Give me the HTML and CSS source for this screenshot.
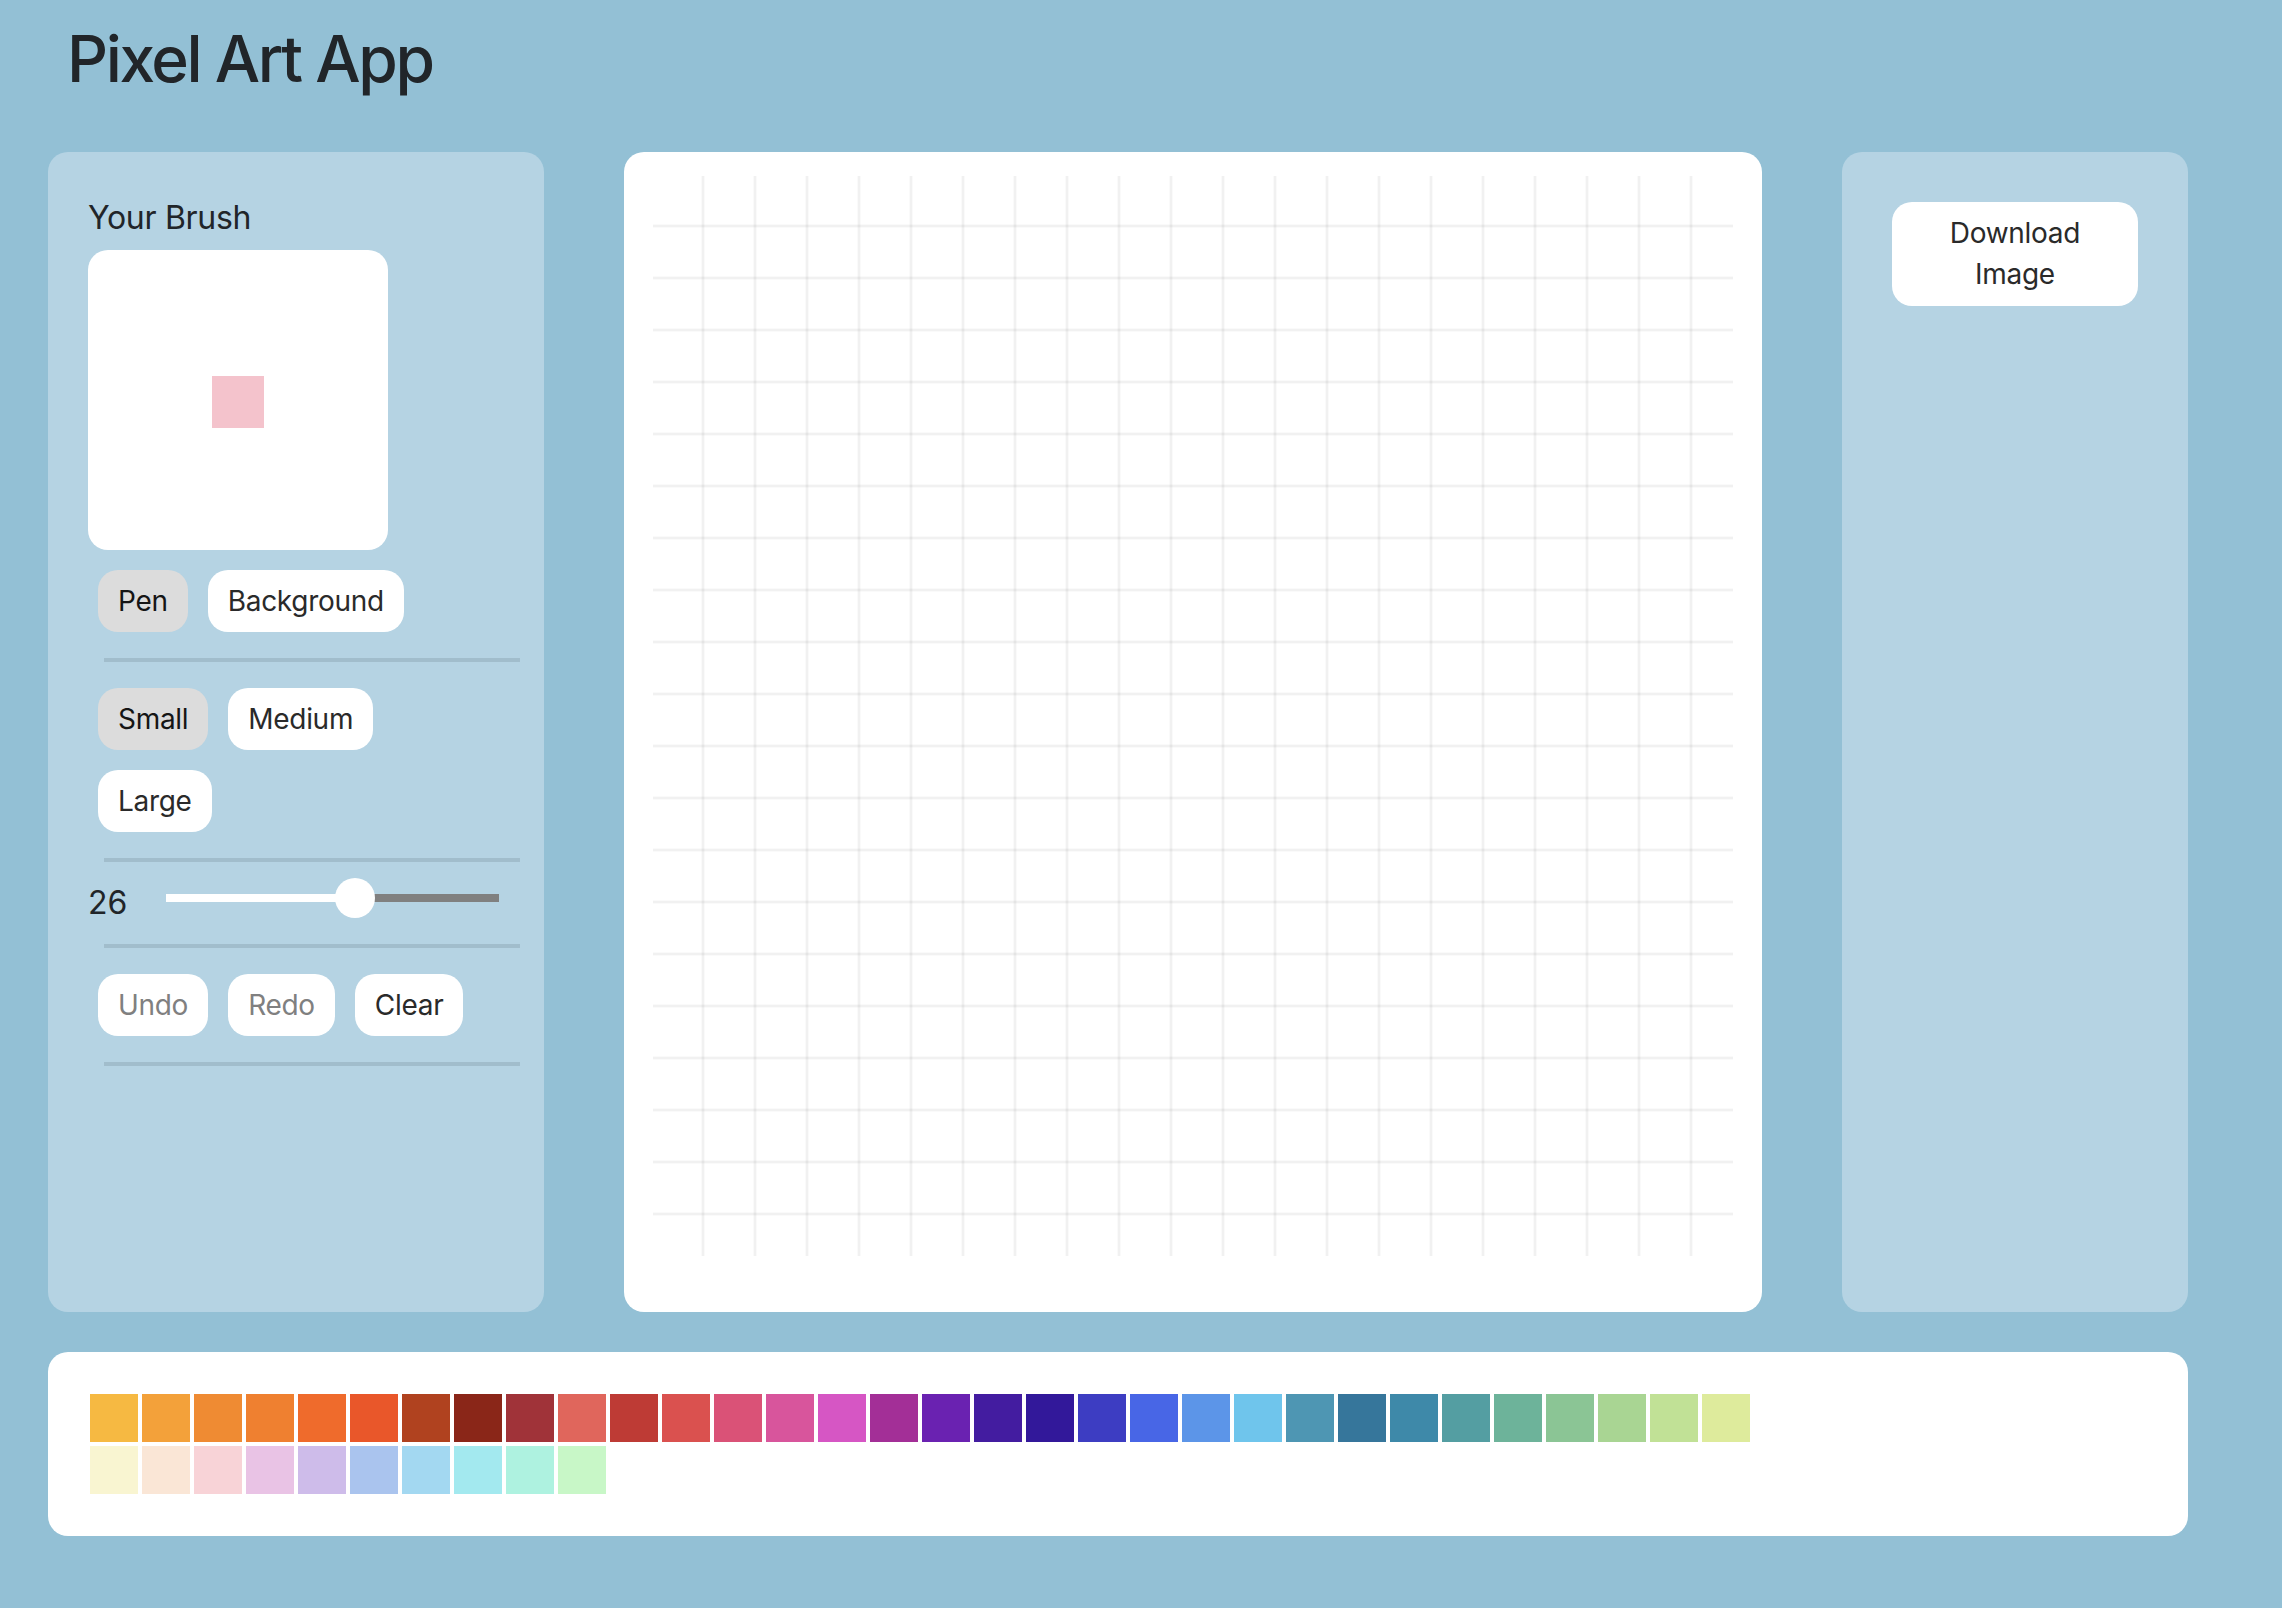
FILE: index.html
```html
<!DOCTYPE html>
<html lang="en">
<head>
<meta charset="utf-8">
<title>Pixel Art App</title>
<link rel="stylesheet" href="styles.css">
</head>
<body>
<h1 class="app-title">Pixel Art App</h1>
<div class="layout">
  <div class="workspace">
    <aside class="panel tools">
      <div class="brush-label">Your Brush</div>
      <div class="brush-preview"><div class="brush-dot"></div></div>
      <div class="btn-group">
        <button class="btn active">Pen</button>
        <button class="btn">Background</button>
      </div>
      <hr class="divider">
      <div class="btn-group">
        <button class="btn active">Small</button>
        <button class="btn">Medium</button>
        <button class="btn">Large</button>
      </div>
      <hr class="divider">
      <div class="size-row">
        <span class="size-value">26</span>
        <input class="size-slider" type="range" min="0" max="45" value="26" style="--fill: 56.8%">
      </div>
      <hr class="divider">
      <div class="btn-group">
        <button class="btn" disabled>Undo</button>
        <button class="btn" disabled>Redo</button>
        <button class="btn">Clear</button>
      </div>
      <hr class="divider">
    </aside>
    <main class="panel canvas-panel">
      <div class="pixel-grid"></div>
    </main>
    <aside class="panel side">
      <button class="btn btn-download">Download Image</button>
    </aside>
  </div>
  <section class="palette">
    <div class="palette-row">
      <span class="swatch" style="background:#f6b942"></span>
      <span class="swatch" style="background:#f3a13a"></span>
      <span class="swatch" style="background:#ef8b33"></span>
      <span class="swatch" style="background:#ef8030"></span>
      <span class="swatch" style="background:#ef6b2c"></span>
      <span class="swatch" style="background:#e9572a"></span>
      <span class="swatch" style="background:#b0421f"></span>
      <span class="swatch" style="background:#8a2618"></span>
      <span class="swatch" style="background:#a03339"></span>
      <span class="swatch" style="background:#e0665c"></span>
      <span class="swatch" style="background:#be3b35"></span>
      <span class="swatch" style="background:#da514f"></span>
      <span class="swatch" style="background:#da5277"></span>
      <span class="swatch" style="background:#d8559c"></span>
      <span class="swatch" style="background:#d656c4"></span>
      <span class="swatch" style="background:#a32f97"></span>
      <span class="swatch" style="background:#6a22b1"></span>
      <span class="swatch" style="background:#431ca0"></span>
      <span class="swatch" style="background:#32189a"></span>
      <span class="swatch" style="background:#3d3dc2"></span>
      <span class="swatch" style="background:#4866e6"></span>
      <span class="swatch" style="background:#5c95e8"></span>
      <span class="swatch" style="background:#6fc5ec"></span>
      <span class="swatch" style="background:#4e96b3"></span>
      <span class="swatch" style="background:#36769b"></span>
      <span class="swatch" style="background:#3e89a9"></span>
      <span class="swatch" style="background:#549ea2"></span>
      <span class="swatch" style="background:#6db39a"></span>
      <span class="swatch" style="background:#8bc595"></span>
      <span class="swatch" style="background:#a9d593"></span>
      <span class="swatch" style="background:#c1e196"></span>
      <span class="swatch" style="background:#deeb9c"></span>
    </div>
    <div class="palette-row">
      <span class="swatch" style="background:#f9f5d1"></span>
      <span class="swatch" style="background:#fae6d6"></span>
      <span class="swatch" style="background:#f8d3d7"></span>
      <span class="swatch" style="background:#e9c3e5"></span>
      <span class="swatch" style="background:#cebcea"></span>
      <span class="swatch" style="background:#aac4ee"></span>
      <span class="swatch" style="background:#a3d8f1"></span>
      <span class="swatch" style="background:#a3e9ef"></span>
      <span class="swatch" style="background:#aef2e0"></span>
      <span class="swatch" style="background:#c8f7c7"></span>
    </div>
  </section>
</div>
</body>
</html>
```

FILE: styles.css
```css
* { box-sizing: border-box; }

body {
  margin: 0;
  background: #93c0d5;
  color: #212529;
  font-family: Inter, "Noto Sans", "Liberation Sans", sans-serif;
  font-size: 32px;
  line-height: 1.5;
}

.app-title {
  margin: 0 0 55px 0;
  padding: 20px 0 0 67px;
  font-size: 64px;
  line-height: 77px;
  font-weight: 500;
  letter-spacing: -2.4px;
}

.layout {
  width: 2140px;
  margin-left: 48px;
}

.workspace {
  display: flex;
  gap: 80px;
  align-items: stretch;
}

.panel {
  border-radius: 20px;
}

.tools {
  width: 496px;
  padding: 40px;
  background: #b5d3e3;
}

.brush-label {
  padding-top: 2px;
  line-height: 48px;
  letter-spacing: -0.3px;
}

.brush-preview {
  width: 300px;
  height: 300px;
  margin: 8px 0 10px;
  background: #fff;
  border-radius: 20px;
  display: flex;
  align-items: center;
  justify-content: center;
}

.brush-dot {
  width: 52px;
  height: 52px;
  background: #f4c3cc;
  margin-top: 4px;
}

.btn-group {
  display: flex;
  flex-wrap: wrap;
  width: 416px;
}

.btn {
  margin: 10px;
  padding: 10px 20px;
  border: none;
  border-radius: 20px;
  background: #fff;
  color: #2a2a2a;
  font-family: inherit;
  font-size: 28px;
  line-height: 42px;
  letter-spacing: -0.3px;
}

.btn.active {
  background: #dcdcdc;
  color: #151515;
}

.btn:disabled {
  color: #808080;
}

.divider {
  border: 0;
  height: 4px;
  width: 416px;
  margin: 16px 0 16px 16px;
  background: #a1bdcc;
}

.size-row {
  display: flex;
  align-items: center;
  height: 50px;
}

.size-value {
  width: 78px;
  line-height: 48px;
}

.size-slider {
  -webkit-appearance: none;
  appearance: none;
  width: 333px;
  height: 40px;
  margin: 0 0 10px 0;
  padding: 0;
  background: transparent;
}

.size-slider::-webkit-slider-runnable-track {
  height: 8px;
  background: linear-gradient(to right, #fff 0 var(--fill), #808080 var(--fill) 100%);
  border: none;
}

.size-slider::-webkit-slider-thumb {
  -webkit-appearance: none;
  appearance: none;
  width: 40px;
  height: 40px;
  margin-top: -16px;
  border: none;
  border-radius: 50%;
  background: #fff;
}

.canvas-panel {
  width: 1138px;
  padding: 24px 29px 56px;
  background: #fff;
}

.pixel-grid {
  width: 1080px;
  height: 1080px;
  background-image:
    linear-gradient(to right, rgba(0,0,0,0.02) 0 1px, rgba(0,0,0,0.055) 1px 3px, rgba(0,0,0,0.02) 3px 4px, transparent 4px),
    linear-gradient(to bottom, rgba(0,0,0,0.02) 0 1px, rgba(0,0,0,0.055) 1px 3px, rgba(0,0,0,0.02) 3px 4px, transparent 4px);
  background-size: 52px 52px;
  background-position: 48px 48px;
}

.side {
  width: 346px;
  padding: 40px;
  background: #b5d3e3;
  display: flex;
  flex-direction: column;
  align-items: stretch;
}

.btn-download {
  line-height: 41px;
  padding: 11px 20px;
  text-align: center;
}

.palette {
  margin-top: 40px;
  padding: 40px;
  background: #fff;
  border-radius: 20px;
}

.palette-row {
  display: flex;
}

.swatch {
  display: block;
  width: 48px;
  height: 48px;
  margin: 2px;
}
```
